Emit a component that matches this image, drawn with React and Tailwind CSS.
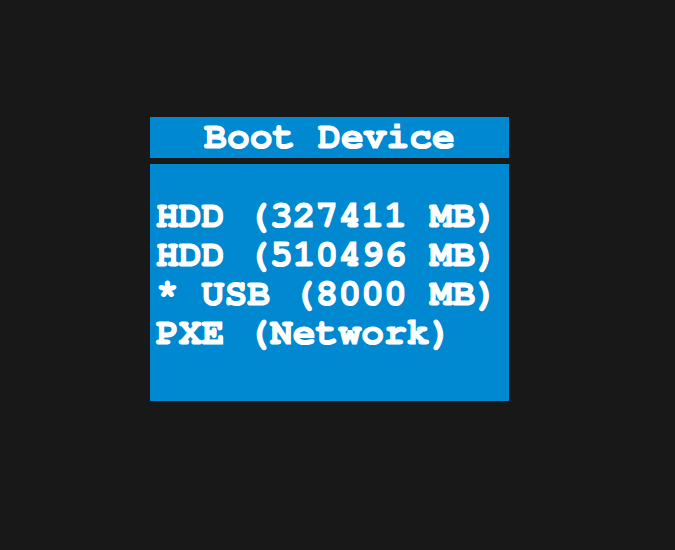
export default function App() {
  const lines = ["HDD (327411 MB)", "HDD (510496 MB)", "* USB (8000 MB)", "PXE (Network)"];
  return (
    <div className="w-[675px] h-[550px] bg-[#181818] pl-[150px] pt-[117px] font-['FreeMono','Liberation_Mono',monospace] font-bold text-white [-webkit-text-stroke:1.2px_white]">
      <div className="w-[359px] flex flex-col gap-[6px]">
        <div className="h-[41px] bg-[#0088d0] text-[38px] leading-[41px] text-center whitespace-pre">Boot Device</div>
        <div className="h-[237px] bg-[#0088d0] text-[38px] leading-[39px] pt-[33px] pl-[6px] whitespace-pre">
          {lines.map((l) => (
            <div key={l}>{l}</div>
          ))}
        </div>
      </div>
    </div>
  );
}
